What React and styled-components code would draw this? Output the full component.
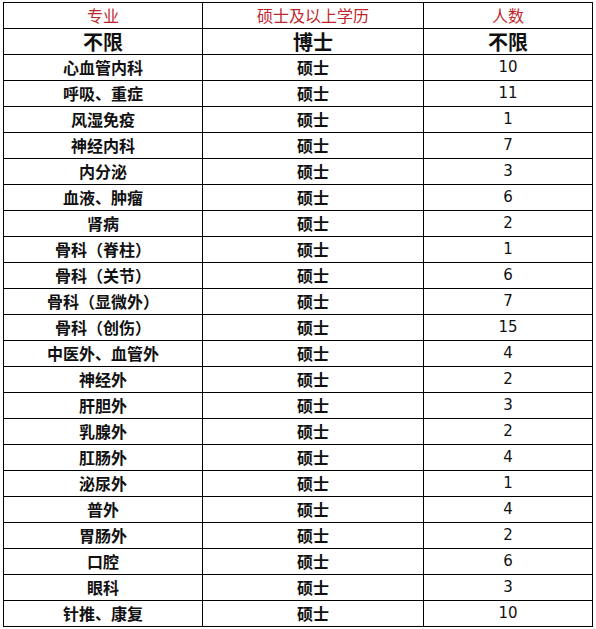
import React from "react";
import styled, { createGlobalStyle } from "styled-components";

const Global = createGlobalStyle`
  html, body { margin: 0; padding: 0; background: #fff; }
  body { font-family: "Noto Sans CJK SC", "Noto Sans", sans-serif; }
`;

const Page = styled.div`
  padding: 2px 0 0 3px;
`;

const Table = styled.table`
  border-collapse: collapse;
  table-layout: fixed;
  width: 589px;
  border: 1px solid #000;
`;

const Cell = styled.td`
  border: 1px solid #000;
  height: 25px;
  padding: 0;
  text-align: center;
  vertical-align: middle;
  line-height: 25px;
  white-space: nowrap;
  color: ${(p) => (p.$head ? "#c0262c" : "#111")};
  font-size: ${(p) => (p.$big ? "20px" : "16px")};
  font-weight: ${(p) => (p.$big ? 700 : p.$head ? 400 : p.$num ? 400 : 600)};
  font-family: ${(p) =>
    p.$num && !p.$big
      ? `"DejaVu Sans", Verdana, sans-serif`
      : `"Noto Sans CJK SC", "Noto Sans", sans-serif`};
  ${(p) => p.$num && !p.$big && "font-size: 15px;"}
`;

const rows = [
  ["心血管内科", "硕士", "10"],
  ["呼吸、重症", "硕士", "11"],
  ["风湿免疫", "硕士", "1"],
  ["神经内科", "硕士", "7"],
  ["内分泌", "硕士", "3"],
  ["血液、肿瘤", "硕士", "6"],
  ["肾病", "硕士", "2"],
  ["骨科（脊柱）", "硕士", "1"],
  ["骨科（关节）", "硕士", "6"],
  ["骨科（显微外）", "硕士", "7"],
  ["骨科（创伤）", "硕士", "15"],
  ["中医外、血管外", "硕士", "4"],
  ["神经外", "硕士", "2"],
  ["肝胆外", "硕士", "3"],
  ["乳腺外", "硕士", "2"],
  ["肛肠外", "硕士", "4"],
  ["泌尿外", "硕士", "1"],
  ["普外", "硕士", "4"],
  ["胃肠外", "硕士", "2"],
  ["口腔", "硕士", "6"],
  ["眼科", "硕士", "3"],
  ["针推、康复", "硕士", "10"],
];

export default function App() {
  return (
    <Page>
      <Global />
      <Table>
        <colgroup>
          <col style={{ width: 199 }} />
          <col style={{ width: 221 }} />
          <col style={{ width: 169 }} />
        </colgroup>
        <tbody>
          <tr>
            <Cell $head>专业</Cell>
            <Cell $head>硕士及以上学历</Cell>
            <Cell $head>人数</Cell>
          </tr>
          <tr>
            <Cell $big>不限</Cell>
            <Cell $big>博士</Cell>
            <Cell $big>不限</Cell>
          </tr>
          {rows.map((r) => (
            <tr key={r[0]}>
              <Cell>{r[0]}</Cell>
              <Cell>{r[1]}</Cell>
              <Cell $num>{r[2]}</Cell>
            </tr>
          ))}
        </tbody>
      </Table>
    </Page>
  );
}
